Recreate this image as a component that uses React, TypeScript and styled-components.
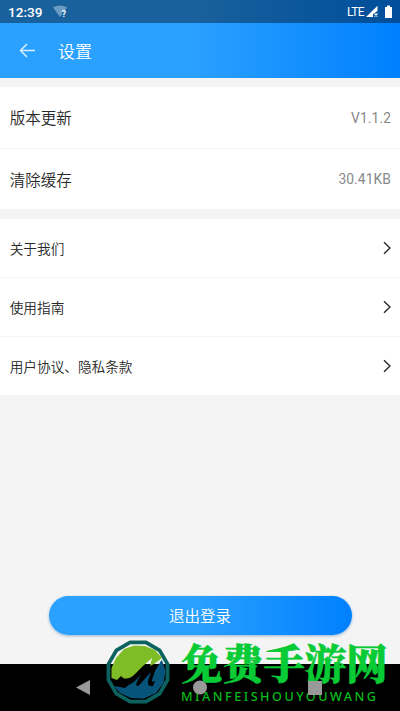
import React from "react";
import styled, { createGlobalStyle } from "styled-components";

const Global = createGlobalStyle`
  * { box-sizing: border-box; }
  body { margin: 0; background: #f4f4f4; }
`;

const blue = "linear-gradient(90deg, #2aa0ff 0%, #2aa0ff 48%, #0080ff 100%)";

const Screen = styled.div`
  position: relative;
  display: flex;
  flex-direction: column;
  width: 400px;
  height: 711px;
  overflow: hidden;
  background: #f4f4f4;
  color: #282828;
  font-family: Roboto, "Noto Sans CJK SC", sans-serif;
`;
const StatusBar = styled.div`
  display: flex;
  align-items: center;
  height: 23px;
  padding: 1px 7px 0 8px;
  background: linear-gradient(90deg, #19619c 0%, #19619c 48%, #004e9b 100%);
  color: #fff;
`;
const Clock = styled.span`
  width: 45px;
  font-size: 13.6px;
  font-weight: 500;
`;
const Network = styled.span`
  margin-left: auto;
  margin-right: 2px;
  font-size: 12px;
  letter-spacing: -0.6px;
`;
const Header = styled.header`
  display: flex;
  align-items: center;
  gap: 22px;
  height: 55px;
  padding-left: 19px;
  background: ${blue};
  color: #fff;
`;
const Title = styled.h1`
  margin: 2px 0 0;
  font-size: 17px;
  line-height: 24px;
  font-weight: 350;
`;
const Group = styled.section<{ $top: number }>`
  margin-top: ${(p) => p.$top}px;
  background: #fff;
`;
const Row = styled.div<{ $height: number; $size: number }>`
  display: flex;
  align-items: center;
  justify-content: space-between;
  height: ${(p) => p.$height}px;
  padding: 0 9px 0 10px;
  font-size: ${(p) => p.$size}px;
  & + & { border-top: 1px solid #f4f4f4; }
`;
const Label = styled.span`
  margin-left: -0.3px;
  padding-bottom: 1px;
  font-family: "Noto Sans CJK SC", sans-serif;
  font-weight: 350;
  line-height: 20px;
`;
const Value = styled.span`
  color: #888;
  font-size: 13.8px;
  letter-spacing: 0.1px;
`;
const Logout = styled.button`
  width: 303px;
  height: 39px;
  margin: auto auto 29px;
  padding: 0 0 1px;
  border: 0;
  border-radius: 20px;
  background: ${blue};
  box-shadow: 0 1px 3px rgba(0, 80, 160, 0.4);
  color: #fff;
  font: 350 15.5px "Noto Sans CJK SC", sans-serif;
`;
const NavBar = styled.nav`
  display: flex;
  height: 47px;
  background: #000;
`;
const Watermark = styled.div`
  position: absolute;
  left: 105px;
  top: 640px;
  display: flex;
  gap: 10px;
`;
const Brand = styled.div`
  display: flex;
  flex-direction: column;
  color: #08cb35;
  white-space: nowrap;
`;
const BrandName = styled.span`
  margin-top: -2px;
  font: 900 41.3px/46px "Noto Serif CJK SC", "Noto Sans CJK SC", serif;
  -webkit-text-stroke: 0.6px #08cb35;
`;
const BrandLatin = styled.span`
  margin-top: 5px;
  font: 500 12.6px/16px "Noto Sans", sans-serif;
  letter-spacing: 2.5px;
  color: #08bb18;
`;
const NavIcons = styled.svg`
  position: absolute;
  left: 0;
  bottom: 0;
`;

const Chevron = () => (
  <svg width="8" height="14" viewBox="0 0 8 14" fill="none" stroke="#222" strokeWidth="1.3">
    <path d="M1 1.2 7 7 1 12.8" />
  </svg>
);

const polygon = (r: number) =>
  Array.from({ length: 12 }, (_, i) => {
    const a = ((i * 30 + 15) * Math.PI) / 180;
    return `${(33 + r * Math.cos(a)).toFixed(2)},${(32 + r * Math.sin(a)).toFixed(2)}`;
  }).join(" ");

const Emblem = () => (
  <svg width="66" height="65" viewBox="0 0 66 65">
    <defs>
      <mask id="letter-gap">
        <path fill="#fff" d="M0 0H66V65H0Z" />
        <path
          fill="#000"
          d="M9 42 14 39Q22 42 28 37L36 29 46 20 42 31 47 27 56 21 50 31 47 40Q46 43 50 41L48 46Q42 47 43 41L46 32 37 42Q32 49 31 44L36 34Q28 46 18 46Z"
        />
      </mask>
    </defs>
    <polygon points={polygon(30.6)} fill="none" stroke="#0b625f" strokeWidth="3.8" strokeLinejoin="round" />
    <path d="M6.5 38 6.5 28 11 18 19 9 29 5.5 40 6 50 10 57 18 49 24 45 26 47 18 38 26 30 34Q24 40 18 38L16 36 12 40Z" fill="#7fbd27" />
    <path mask="url(#letter-gap)" d="M9 46 20 48 27 42 32 34 40 28 42 33 57 20 60.5 31 58.5 43 51 53 39 58.5 26 58 15 53Z" fill="#07547b" />
  </svg>
);

const settings = [
  { label: "版本更新", value: "V1.1.2" },
  { label: "清除缓存", value: "30.41KB" },
];
const links = [
  { label: "关于我们", height: 58 },
  { label: "使用指南", height: 59 },
  { label: "用户协议、隐私条款", height: 59 },
];

export default function App() {
  return (
    <Screen>
      <Global />
      <StatusBar>
        <Clock>12:39</Clock>
        <svg width="16" height="14" viewBox="0 0 16 14">
          <path d="M0 2.5Q7 -1.5 14 2.5L7 12Z" fill="#6c9cc3" />
          <path d="M9 6.5H13V13H9Z" fill="#19619c" />
          <text x="8.7" y="12" fill="#fff" fontSize="8.5" fontWeight="700">?</text>
        </svg>
        <Network>LTE</Network>
        <svg width="27" height="14" viewBox="0 0 27 14" fill="#fff">
          <path d="M0 12 11.5 .7V6L7 9V12Z" />
          <path d="m8.5 8.5 3 3m0-3-3 3" stroke="#fff" strokeWidth="1.1" />
          <path d="M19 2h2V.5h3V2h2v11h-7z" />
        </svg>
      </StatusBar>
      <Header>
        <svg width="17" height="16" viewBox="0 0 17 16" fill="none" stroke="#d8efff" strokeWidth="1.5">
          <path d="M16 7.5H2M8 1 1.5 7.5 8 14" />
        </svg>
        <Title>设置</Title>
      </Header>
      <Group $top={9}>
        {settings.map((s) => (
          <Row key={s.label} $height={61} $size={15.5}>
            <Label>{s.label}</Label>
            <Value>{s.value}</Value>
          </Row>
        ))}
      </Group>
      <Group $top={10}>
        {links.map((l) => (
          <Row key={l.label} $height={l.height} $size={13.65}>
            <Label>{l.label}</Label>
            <Chevron />
          </Row>
        ))}
      </Group>
      <Logout>退出登录</Logout>
      <NavBar />
      <Watermark>
        <Emblem />
        <Brand>
          <BrandName>免费手游网</BrandName>
          <BrandLatin>MIANFEISHOUYOUWANG</BrandLatin>
        </Brand>
      </Watermark>
      <NavIcons width="400" height="47" viewBox="0 0 400 47" fill="#999">
        <path d="M76 23.5 90 16V31Z" />
        <circle cx="200" cy="23.5" r="7" />
        <path d="M308 17H322V31H308Z" />
      </NavIcons>
    </Screen>
  );
}
